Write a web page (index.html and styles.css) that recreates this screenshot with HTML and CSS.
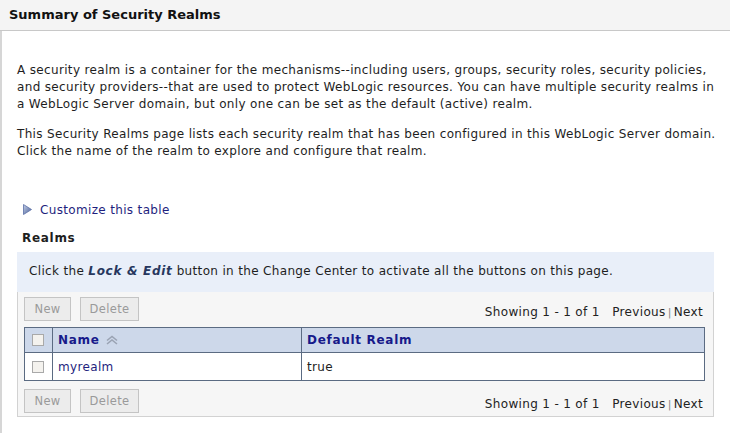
FILE: index.html
```html
<!DOCTYPE html>
<html>
<head>
<meta charset="utf-8">
<link rel="stylesheet" href="styles.css">
</head>
<body>
<div class="header">Summary of Security Realms</div>
<div class="main">
  <p class="intro">A security realm is a container for the mechanisms--including users, groups, security roles, security policies, and security providers--that are used to protect WebLogic resources. You can have multiple security realms in a WebLogic Server domain, but only one can be set as the default (active) realm.</p>
  <p class="intro">This Security Realms page lists each security realm that has been configured in this WebLogic Server domain. Click the name of the realm to explore and configure that realm.</p>
  <div class="customize">
    <svg class="tri" width="9" height="11" viewBox="0 0 9 11"><defs><linearGradient id="g" x1="0" y1="0" x2="1" y2="1"><stop offset="0" stop-color="#c3cfe6"/><stop offset="1" stop-color="#4a5f99"/></linearGradient></defs><path d="M0.5 0.5 L8.5 5.5 L0.5 10.5 Z" fill="url(#g)" stroke="#5b6ea6" stroke-width="0.8"/></svg>
    <span class="link">Customize this table</span>
  </div>
  <div class="section-title">Realms</div>
  <div class="message">Click the <b class="em">Lock &amp; Edit</b> button in the Change Center to activate all the buttons on this page.</div>
  <div class="tablebox">
    <div class="controls">
      <div class="buttons"><span class="btn btn-new">New</span><span class="btn btn-del">Delete</span></div>
      <div class="paging">Showing 1 - 1 of 1 &nbsp; Previous<span class="sep">|</span>Next</div>
    </div>
    <table class="grid">
      <tr class="head">
        <th class="cb"><span class="check"></span></th>
        <th class="c-name">Name <svg class="sort" width="14" height="10" viewBox="0 0 14 10"><path d="M2 5.5 L7 1.5 L12 5.5" fill="none" stroke="#9aa3b3" stroke-width="1.6"/><path d="M2 9 L7 5 L12 9" fill="none" stroke="#9aa3b3" stroke-width="1.6"/></svg></th>
        <th class="c-def">Default Realm</th>
      </tr>
      <tr class="row">
        <td class="cb"><span class="check"></span></td>
        <td><span class="link">myrealm</span></td>
        <td>true</td>
      </tr>
    </table>
    <div class="controls bottom">
      <div class="buttons"><span class="btn btn-new">New</span><span class="btn btn-del">Delete</span></div>
      <div class="paging">Showing 1 - 1 of 1 &nbsp; Previous<span class="sep">|</span>Next</div>
    </div>
  </div>
</div>
</body>
</html>
```
FILE: styles.css
```css
html, body {
  margin: 0;
  padding: 0;
  background: #ffffff;
}
body {
  font-family: "DejaVu Sans", sans-serif;
  font-size: 12px;
  letter-spacing: 0.34px;
  color: #1e1e1e;
  width: 730px;
  height: 433px;
  overflow: hidden;
}
b, th {
  letter-spacing: 0.7px;
}
.header {
  height: 31px;
  box-sizing: border-box;
  background: #f4f4f4;
  border-bottom: 1px solid #c8c8c8;
  padding: 7px 0 0 9px;
  font-weight: bold;
  font-size: 13px;
  letter-spacing: 0;
  color: #111;
}
.main {
  border-left: 2px solid #d6d6d6;
  padding: 0 14px 0 15px;
  height: 402px;
  box-sizing: border-box;
}
.intro {
  margin: 0;
  line-height: 17px;
}
.intro:first-child {
  padding-top: 31px;
}
.intro + .intro {
  margin-top: 13px;
}
.customize {
  margin-top: 41px;
  padding-left: 6px;
  display: flex;
  align-items: center;
  height: 17px;
}
.tri {
  margin-right: 8px;
}
.link {
  color: #1f1f7e;
}
.section-title {
  margin-top: 12px;
  padding-left: 5px;
  font-weight: bold;
  letter-spacing: 0.7px;
  line-height: 17px;
}
.message {
  margin-top: 5px;
  margin-right: 2px;
  height: 40px;
  box-sizing: border-box;
  background: #e9eff9;
  padding: 11px 0 0 12px;
  line-height: 17px;
}
.em {
  font-style: italic;
  color: #26375e;
}
.tablebox {
  margin-right: 2px;
  background: #f6f6f6;
  border: 1px solid #d2d2d2;
  border-top: none;
  padding: 5px 8px 3px 6px;
}
.controls {
  display: flex;
  justify-content: space-between;
  align-items: flex-start;
}
.buttons {
  display: flex;
  gap: 9px;
}
.btn {
  display: block;
  height: 24px;
  box-sizing: border-box;
  border: 1px solid #c4c4c4;
  background: #ececec;
  color: #9a9a9a;
  font-size: 11.5px;
  line-height: 22px;
  text-align: center;
}
.btn-new { width: 47px; }
.btn-del { width: 59px; }
.paging {
  color: #222;
  padding-top: 7px;
  padding-right: 2px;
  line-height: 17px;
}
.sep {
  color: #888;
  margin: 0 2px;
  font-size: 11px;
}
.grid {
  margin-top: 6px;
  width: 100%;
  border-collapse: collapse;
  border: 1px solid #5b6b82;
}
.grid th, .grid td {
  border: 1px solid #5b6b82;
  text-align: left;
  padding: 0 0 0 5px;
}
.grid .head th {
  background: #cdd8ea;
  height: 24px;
  color: #171a8a;
  font-weight: bold;
}
.grid .row td {
  background: #ffffff;
  height: 27px;
}
.grid .cb {
  width: 20px;
  padding-left: 7px;
}
.c-name { width: 243px; }
.check {
  display: block;
  width: 10px;
  height: 10px;
  border: 1px solid #a9a9a9;
  background: #f4f2ee;
}
.sort {
  vertical-align: -1px;
  margin-left: 1px;
}
.controls.bottom {
  margin-top: 8px;
}
```
